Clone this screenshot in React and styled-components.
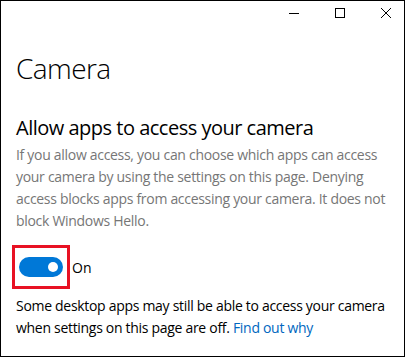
import React, { useState } from 'react'
import styled, { createGlobalStyle } from 'styled-components'

const GlobalStyle = createGlobalStyle`
  html, body {
    margin: 0;
    padding: 0;
    background: #ffffff;
  }
  body {
    font-family: "Open Sans", "Noto Sans", sans-serif;
  }
`

export default function App(){
  const [on, setOn] = useState(true)

  return (
    <Window>
      <GlobalStyle />
      <TitleBar>
        <Control aria-label="Minimize">
          <svg width="10" height="10" viewBox="0 0 10 10">
            <path d="M0 5.5h10" stroke="#000" strokeWidth="1" />
          </svg>
        </Control>
        <Control aria-label="Maximize">
          <svg width="10" height="10" viewBox="0 0 10 10">
            <rect x="0.5" y="0.5" width="9" height="9" fill="none" stroke="#000" strokeWidth="1" />
          </svg>
        </Control>
        <Control aria-label="Close">
          <svg width="10" height="10" viewBox="0 0 10 10">
            <path d="M0 0L10 10M10 0L0 10" stroke="#000" strokeWidth="1" />
          </svg>
        </Control>
      </TitleBar>
      <Content>
        <PageTitle>Camera</PageTitle>
        <Heading>Allow apps to access your camera</Heading>
        <Description>
          If you allow access, you can choose which apps can access your camera by using the settings on this page. Denying access blocks apps from accessing your camera. It does not block Windows Hello.
        </Description>
        <ToggleRow>
          <Highlight>
            <Switch $on={on} onClick={() => setOn(v => !v)}>
              <Knob $on={on} />
            </Switch>
          </Highlight>
          <ToggleLabel>{on ? 'On' : 'Off'}</ToggleLabel>
        </ToggleRow>
        <Note>
          Some desktop apps may still be able to access your camera when settings on this page are off. <Link href="#">Find out why</Link>
        </Note>
      </Content>
    </Window>
  )
}

const Window = styled.div`
  width: 405px;
  height: 357px;
  box-sizing: border-box;
  border: 1px solid #000;
  background: #fff;
  display: flex;
  flex-direction: column;
  overflow: hidden;
`

const TitleBar = styled.div`
  height: 24px;
  padding-right: 13px;
  display: flex;
  justify-content: flex-end;
  align-items: center;
  gap: 36px;
`

const Control = styled.div`
  width: 10px;
  height: 10px;
  display: flex;
  svg { display: block; }
`

const Content = styled.div`
  padding: 0 10px 0 15px;
  display: flex;
  flex-direction: column;
`

const PageTitle = styled.h1`
  margin: 25px 0 0;
  font-size: 28px;
  font-weight: 300;
  line-height: 36px;
  letter-spacing: -0.6px;
  color: #000;
`

const Heading = styled.h2`
  margin: 28px 0 0;
  font-size: 20px;
  font-weight: 400;
  line-height: 28px;
  letter-spacing: -0.5px;
  color: #000;
`

const Description = styled.p`
  margin: 2px 0 0;
  font-size: 14px;
  line-height: 22px;
  letter-spacing: -0.3px;
  color: #767676;
`

const ToggleRow = styled.div`
  margin-top: 13px;
  display: flex;
  align-items: center;
  gap: 2px;
`

const Highlight = styled.div`
  margin-left: -4px;
  padding: 9px 4px;
  border: 3px solid #e81123;
  display: flex;
`

const Switch = styled.button`
  width: 44px;
  height: 20px;
  border-radius: 10px;
  border: none;
  padding: 0 5px;
  background: ${p => p.$on ? '#0078d7' : '#fff'};
  display: flex;
  align-items: center;
  justify-content: ${p => p.$on ? 'flex-end' : 'flex-start'};
  cursor: pointer;
`

const Knob = styled.span`
  width: 10px;
  height: 10px;
  border-radius: 50%;
  background: ${p => p.$on ? '#fff' : '#000'};
`

const ToggleLabel = styled.span`
  font-size: 14px;
  color: #000;
`

const Note = styled.p`
  margin: 6px 0 0;
  font-size: 14px;
  line-height: 22px;
  letter-spacing: -0.3px;
  color: #000;
`

const Link = styled.a`
  color: #0067c0;
  text-decoration: none;
`
